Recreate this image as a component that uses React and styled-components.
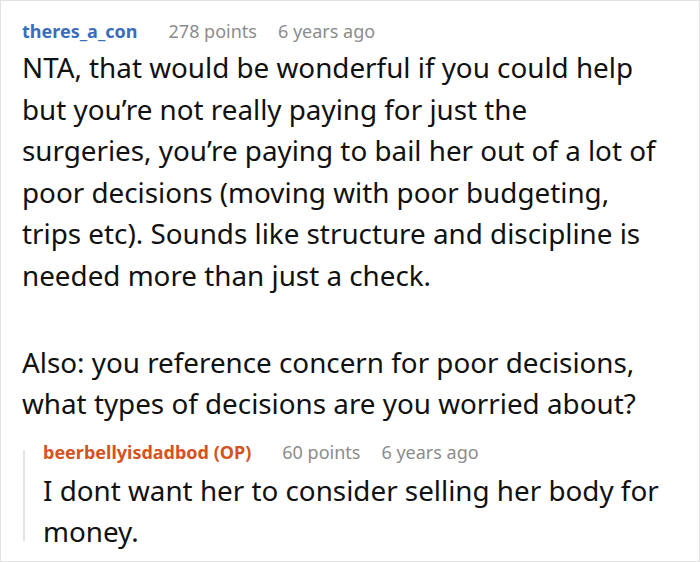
import React from 'react';
import styled, { createGlobalStyle } from 'styled-components';

const GlobalStyle = createGlobalStyle`
    html, body {
        margin: 0;
        padding: 0;
        background: #ffffff;
    }
    body {
        font-family: "Noto Sans", "Open Sans", sans-serif;
    }
`;

const comment = {
    author: 'theres_a_con',
    points: '278 points',
    time: '6 years ago',
    paragraphs: [
        'NTA, that would be wonderful if you could help but you\u2019re not really paying for just the surgeries, you\u2019re paying to bail her out of a lot of poor decisions (moving with poor budgeting, trips etc). Sounds like structure and discipline is needed more than just a check.',
        'Also: you reference concern for poor decisions, what types of decisions are you worried about?',
    ],
};

const reply = {
    author: 'beerbellyisdadbod (OP)',
    points: '60 points',
    time: '6 years ago',
    paragraphs: ['I dont want her to consider selling her body for money.'],
};

export default function App() {
    return (
        <>
            <GlobalStyle />
            <Frame>
                <Comment>
                    <Meta>
                        <Author>{comment.author}</Author>
                        <Info>{comment.points}</Info>
                        <Info>{comment.time}</Info>
                    </Meta>
                    <Body>
                        {comment.paragraphs.map((p, i) => (
                            <Paragraph key={i}>{p}</Paragraph>
                        ))}
                    </Body>
                    <Reply>
                        <Meta>
                            <Author op>{reply.author}</Author>
                            <Info>{reply.points}</Info>
                            <Info>{reply.time}</Info>
                        </Meta>
                        <Body reply>
                            {reply.paragraphs.map((p, i) => (
                                <Paragraph key={i}>{p}</Paragraph>
                            ))}
                        </Body>
                    </Reply>
                </Comment>
            </Frame>
        </>
    );
}

// Styles
const Frame = styled.div`
    box-sizing: border-box;
    width: 700px;
    height: 562px;
    border: 1px solid #e2e2e2;
    overflow: hidden;
    background: #ffffff;
`;

const Comment = styled.article`
    padding: 18px 0 0 21px;
`;

const Meta = styled.div`
    display: flex;
    align-items: baseline;
    gap: 21px;
    font-size: 18px;
    line-height: 24px;
`;

const Author = styled.span`
    font-weight: 700;
    color: ${(p) => (p.op ? '#d4531e' : '#3b6dba')};
    margin-right: 10px;
`;

const Info = styled.span`
    color: #8c8c8c;
`;

const Body = styled.div`
    max-width: 638px;
    margin-top: ${(p) => (p.reply ? '6px' : '4px')};
    font-size: 27.8px;
    line-height: 41.6px;
    color: #111111;
`;

const Paragraph = styled.p`
    margin: 0 0 45px 0;
    &:last-child {
        margin-bottom: 0;
    }
`;

const Reply = styled.div`
    margin-top: 15px;
    padding-left: 21px;
    background: linear-gradient(#e4e4e4, #e4e4e4) no-repeat 1px 10px / 2px calc(100% - 22px);
`;
